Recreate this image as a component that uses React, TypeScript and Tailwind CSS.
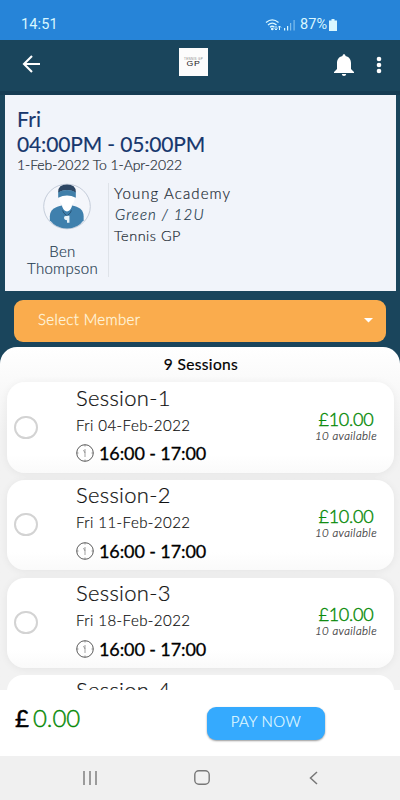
const sessions = [
  { name: "Session-1", date: "Fri 04-Feb-2022" },
  { name: "Session-2", date: "Fri 11-Feb-2022" },
  { name: "Session-3", date: "Fri 18-Feb-2022" },
];

function StatusBar() {
  return (
    <div className="h-10 shrink-0 bg-[#2684d8] flex items-start justify-between pl-[21px] pr-[63px] pt-[15px] text-[#d9f7ff] font-[Roboto] text-[14.5px] leading-[20px]">
      <span className="tracking-[0.15px]">14:51</span>
      <div className="flex items-center h-5">
        <svg width="17" height="14" viewBox="0 0 17 14" fill="none" stroke="currentColor" strokeWidth="1.3">
          <path d="M1 4.5Q7.300 -.8 13.500 4.500M3 7Q7.300 3.300 11.500 7M5 9.300Q7.300 7.300 9.500 9.300" />
          <circle cx="7.300" cy="11" r=".7" fill="currentColor" />
          <path d="M11 8v4M9.500 10.500L11 12L12.500 10.500M14.500 12V8M13 9.500L14.500 8L16 9.500" strokeWidth="1" />
        </svg>
        <svg width="12" height="12" viewBox="0 0 12 12" fill="currentColor" className="ml-[2px]">
          <path d="M0 9h1.200v2.500H0zM3 7h1.200v4.500H3z" />
          <path d="M6 4h1.200v7.500H6zM9.500 1h1.200v10.500H9.500z" opacity=".5" />
        </svg>
        <span className="ml-[4px]">87%</span>
        <svg width="8" height="12" viewBox="0 0 8 12" fill="currentColor" className="ml-[2px]">
          <path d="M2.500 0h3v1.500h2.500v10.500h-8v-10.500h2.500z" />
        </svg>
      </div>
    </div>
  );
}

function Header() {
  return (
    <header className="h-[51px] shrink-0 bg-[#1a455c] flex items-start pl-[22px] text-white">
      <svg width="19" height="18" viewBox="0 0 19 18" fill="none" stroke="currentColor" strokeWidth="2.100" className="mt-[14.5px] shrink-0">
        <path d="M18 9H2M10 1L2 9L10 17" />
      </svg>
      <div className="w-[29px] h-[28px] shrink-0 bg-[#fcfcfc] mt-2 ml-[138px] flex flex-col items-center justify-center text-[#222] font-['Liberation_Sans']">
        <span className="text-[3px] leading-[3px] text-[#888] tracking-[0.3px]">TENNIS GP</span>
        <span className="text-[7px] leading-[6px] tracking-[0.5px] scale-x-125">GP</span>
      </div>
      <svg width="20" height="22" viewBox="0 0 20 22" fill="currentColor" className="mt-[14px] ml-[126px] shrink-0">
        <path d="M8.500 2C8.500-.2 11.500-.2 11.500 2C15.500 3 17 6 17 9V15L20 18V19H0V18L3 15V9C3 6 4.500 3 8.500 2ZM7.800 20H12.200Q12 22 10 22T7.800 20Z" />
      </svg>
      <svg width="6" height="18" viewBox="0 0 6 18" fill="currentColor" className="mt-4 ml-[22px] shrink-0">
        <circle cx="3" cy="3" r="2.300" />
        <circle cx="3" cy="9" r="2.300" />
        <circle cx="3" cy="15" r="2.300" />
      </svg>
    </header>
  );
}

function Avatar() {
  return (
    <svg width="50" height="48" viewBox="0 0 50 48" className="ml-[9px]">
      <ellipse cx="25" cy="24" rx="23.800" ry="22.800" fill="#f4f6fb" stroke="#c3cbd8" />
      <path d="M7.500 38V34C7.500 27 13 24.500 20 23H30C37 24.500 42 27 42 34V38Q36 46.500 25 46.500T7.500 38Z" fill="#3f80ad" />
      <path d="M17 13Q25 9 33 13Q33 20 30 22V24Q28 29 25 29T20 24V22Q17 20 17 13Z" fill="#fff" />
      <path d="M16 9Q16 1.500 25 1.500T34 9V10Q25 5 16 10Z" fill="#2d4764" />
      <path d="M16 9.500Q25 5 34 9.500V15Q25 10.500 16 15Z" fill="#417fa9" />
      <path d="M20.500 28Q21 31 25 33.500Q29 31 29.500 28" fill="none" stroke="#275375" />
      <path d="M22 35.500Q22 33.500 25 33.500H27.500V40.500H25V38Q22 38 22 35.500Z" fill="#e8f3fa" />
    </svg>
  );
}

function ClassCard() {
  return (
    <section className="ml-[5px] mr-1 h-[196px] bg-[#f1f4fa] pl-3 pt-[12px] text-[#222a33]">
      <div className="text-[#17376d] text-[21px] leading-[24.5px] font-normal [-webkit-text-stroke:0.15px_#17376d]">
        <p className="tracking-[0.2px]">Fri</p>
        <p className="tracking-[-0.15px]">04:00PM - 05:00PM</p>
      </div>
      <p className="text-[14px] leading-4 tracking-[-0.08px] mt-[1px] font-light [-webkit-text-stroke:0.2px_#222a33]">1-Feb-2022 To 1-Apr-2022</p>
      <div className="flex mt-[10px]">
        <div className="w-[92px] h-[94px] border-r border-[#dfe3e9] flex flex-col items-center text-center text-[15px] leading-[17px] text-[#284052]">
          <Avatar />
          <p className="mt-[13px] tracking-[0.3px] font-light [-webkit-text-stroke:0.2px_#284052]">Ben<br />Thompson</p>
        </div>
        <div className="pl-[5px] text-[15px] leading-[21px] font-light [-webkit-text-stroke:0.2px_#222a33]">
          <p className="tracking-[1.1px]">Young Academy</p>
          <p className="italic text-[#24475a] tracking-[1.1px] pl-px">Green / 12U</p>
          <p className="tracking-[0.5px] text-[14.500px]">Tennis GP</p>
        </div>
      </div>
    </section>
  );
}

function SessionCard({ name, date }: { name: string; date: string }) {
  return (
    <div className="h-[90.500px] shrink-0 rounded-[18px] bg-gradient-to-b from-white from-80% to-[#fafafa] shadow-[0_1px_8px_rgba(0,0,0,0.06)] flex text-[#111]">
      <div className="w-[69px] pl-[7px] pt-[33.500px]">
        <div className="w-6 h-[23px] rounded-full border-2 border-[#d3d3d3]" />
      </div>
      <div className="flex-1 pt-[2.500px]">
        <h3 className="text-[22px] leading-[26px] font-light tracking-[0.3px] [-webkit-text-stroke:0.2px_#111]">{name}</h3>
        <p className="text-[15px] leading-[20px] mt-[4px] font-light tracking-[0.45px] [-webkit-text-stroke:0.2px_#111]">{date}</p>
        <div className="flex items-center mt-[7.500px]">
          <svg width="18" height="18" viewBox="0 0 18 18" fill="none" stroke="#333" strokeWidth=".8">
            <circle cx="9" cy="9" r="8.300" />
            <path d="M9 5V13M9 9L7.500 6" stroke="#888" />
            <path d="M9 1v1.500M9 15.500v1.500M1 9h1.500M15.500 9h1.500" strokeWidth=".5" />
          </svg>
          <span className="ml-[5px] text-[18px] leading-[22px] tracking-[-0.1px] font-normal text-black [-webkit-text-stroke:0.3px_#000]">16:00 - 17:00</span>
        </div>
      </div>
      <div className="w-[96px] pt-[26.500px] text-center">
        <p className="text-[18px] leading-[20px] font-light tracking-[-0.2px] text-[#088a08] [-webkit-text-stroke:0.4px_#088a08]">£10.00</p>
        <p className="text-[11.500px] leading-[13px] italic font-light text-[#333] tracking-[0.4px] whitespace-nowrap [-webkit-text-stroke:0.2px_#333]">10 available</p>
      </div>
    </div>
  );
}

export default function App() {
  return (
    <div className="w-[400px] h-[800px] flex flex-col overflow-hidden bg-[#1a455c] font-[Lato,sans-serif]">
      <StatusBar />
      <Header />
      <div className="h-1 shrink-0 bg-[#163c53]" />
      <ClassCard />

      <div className="mt-[9px] ml-[14px] mr-[14px] h-[42px] shrink-0 rounded-[9px] bg-[#faac4d] flex items-center justify-between pl-6 pr-[13px] text-[#fff3da]">
        <span className="text-[15px] leading-5 tracking-[0.35px] -mt-[5px] font-light [-webkit-text-stroke:0.3px_#fff3da]">Select Member</span>
        <svg width="9" height="5" viewBox="0 0 9 5" fill="#fff" className="-mt-[2px]">
          <path d="M0 0H9L4.500 4.500Z" />
        </svg>
      </div>

      <main className="mt-[5px] flex-1 min-h-0 rounded-t-[17px] overflow-hidden bg-gradient-to-b from-white to-[#f2f2f2] to-25%">
        <h2 className="h-[35px] pt-[7px] pl-[2px] text-center text-[15.500px] leading-[20px] tracking-[0.35px] font-normal text-black [-webkit-text-stroke:0.2px_#000]">9 Sessions</h2>
        <div className="flex flex-col gap-[7.250px] pl-[7px] pr-[6px]">
          {sessions.map((s) => (
            <SessionCard key={s.name} name={s.name} date={s.date} />
          ))}
          {/* Next card, only its top edge is in view */}
          <div className="h-4 shrink-0 rounded-t-[18px] bg-white pl-[69px] pt-[2px] text-[#111]">
            <h3 className="text-[22px] leading-[26px] font-light tracking-[0.3px] [-webkit-text-stroke:0.2px_#111]">Session-4</h3>
          </div>
        </div>
      </main>

      {/* Total and payment */}
      <footer className="h-[66px] shrink-0 bg-white flex items-start pl-[15px]">
        <p className="text-[24px] leading-[30px] pt-[13px] font-light text-[#088a08] flex gap-[4px]">
          <span className="text-black font-normal [-webkit-text-stroke:0.5px_#000]">£</span>
          <span className="[-webkit-text-stroke:0.4px_#088a08]">0.00</span>
        </p>
        <button className="ml-auto mr-[75px] mt-[17px] w-[118px] h-[33px] rounded-[9px] bg-[#35aafe] text-[#e4fbff] text-[15px] leading-[29px] pb-1 font-light tracking-[0.4px] [-webkit-text-stroke:0.2px_#e4fbff] shadow-[0_1px_2px_rgba(0,0,0,0.4)]">PAY NOW</button>
      </footer>

      <nav className="h-11 shrink-0 bg-[#f0f0f0] flex items-start pl-[83px] pt-[14px]">
        <svg width="14" height="14" viewBox="0 0 14 14" stroke="#777" strokeWidth="1.400" className="mt-px">
          <path d="M1 0V14M7 0V14M13 0V14" />
        </svg>
        <svg width="16" height="15" viewBox="0 0 16 15" fill="none" stroke="#777" strokeWidth="1.400" className="ml-[96.500px]">
          <rect x=".8" y=".8" width="14.400" height="13.400" rx="4" />
        </svg>
        <svg width="9" height="14" viewBox="0 0 9 14" fill="none" stroke="#777" strokeWidth="1.500" className="ml-[99px] mt-px">
          <path d="M8 1L1.500 7L8 13" />
        </svg>
      </nav>
    </div>
  );
}
